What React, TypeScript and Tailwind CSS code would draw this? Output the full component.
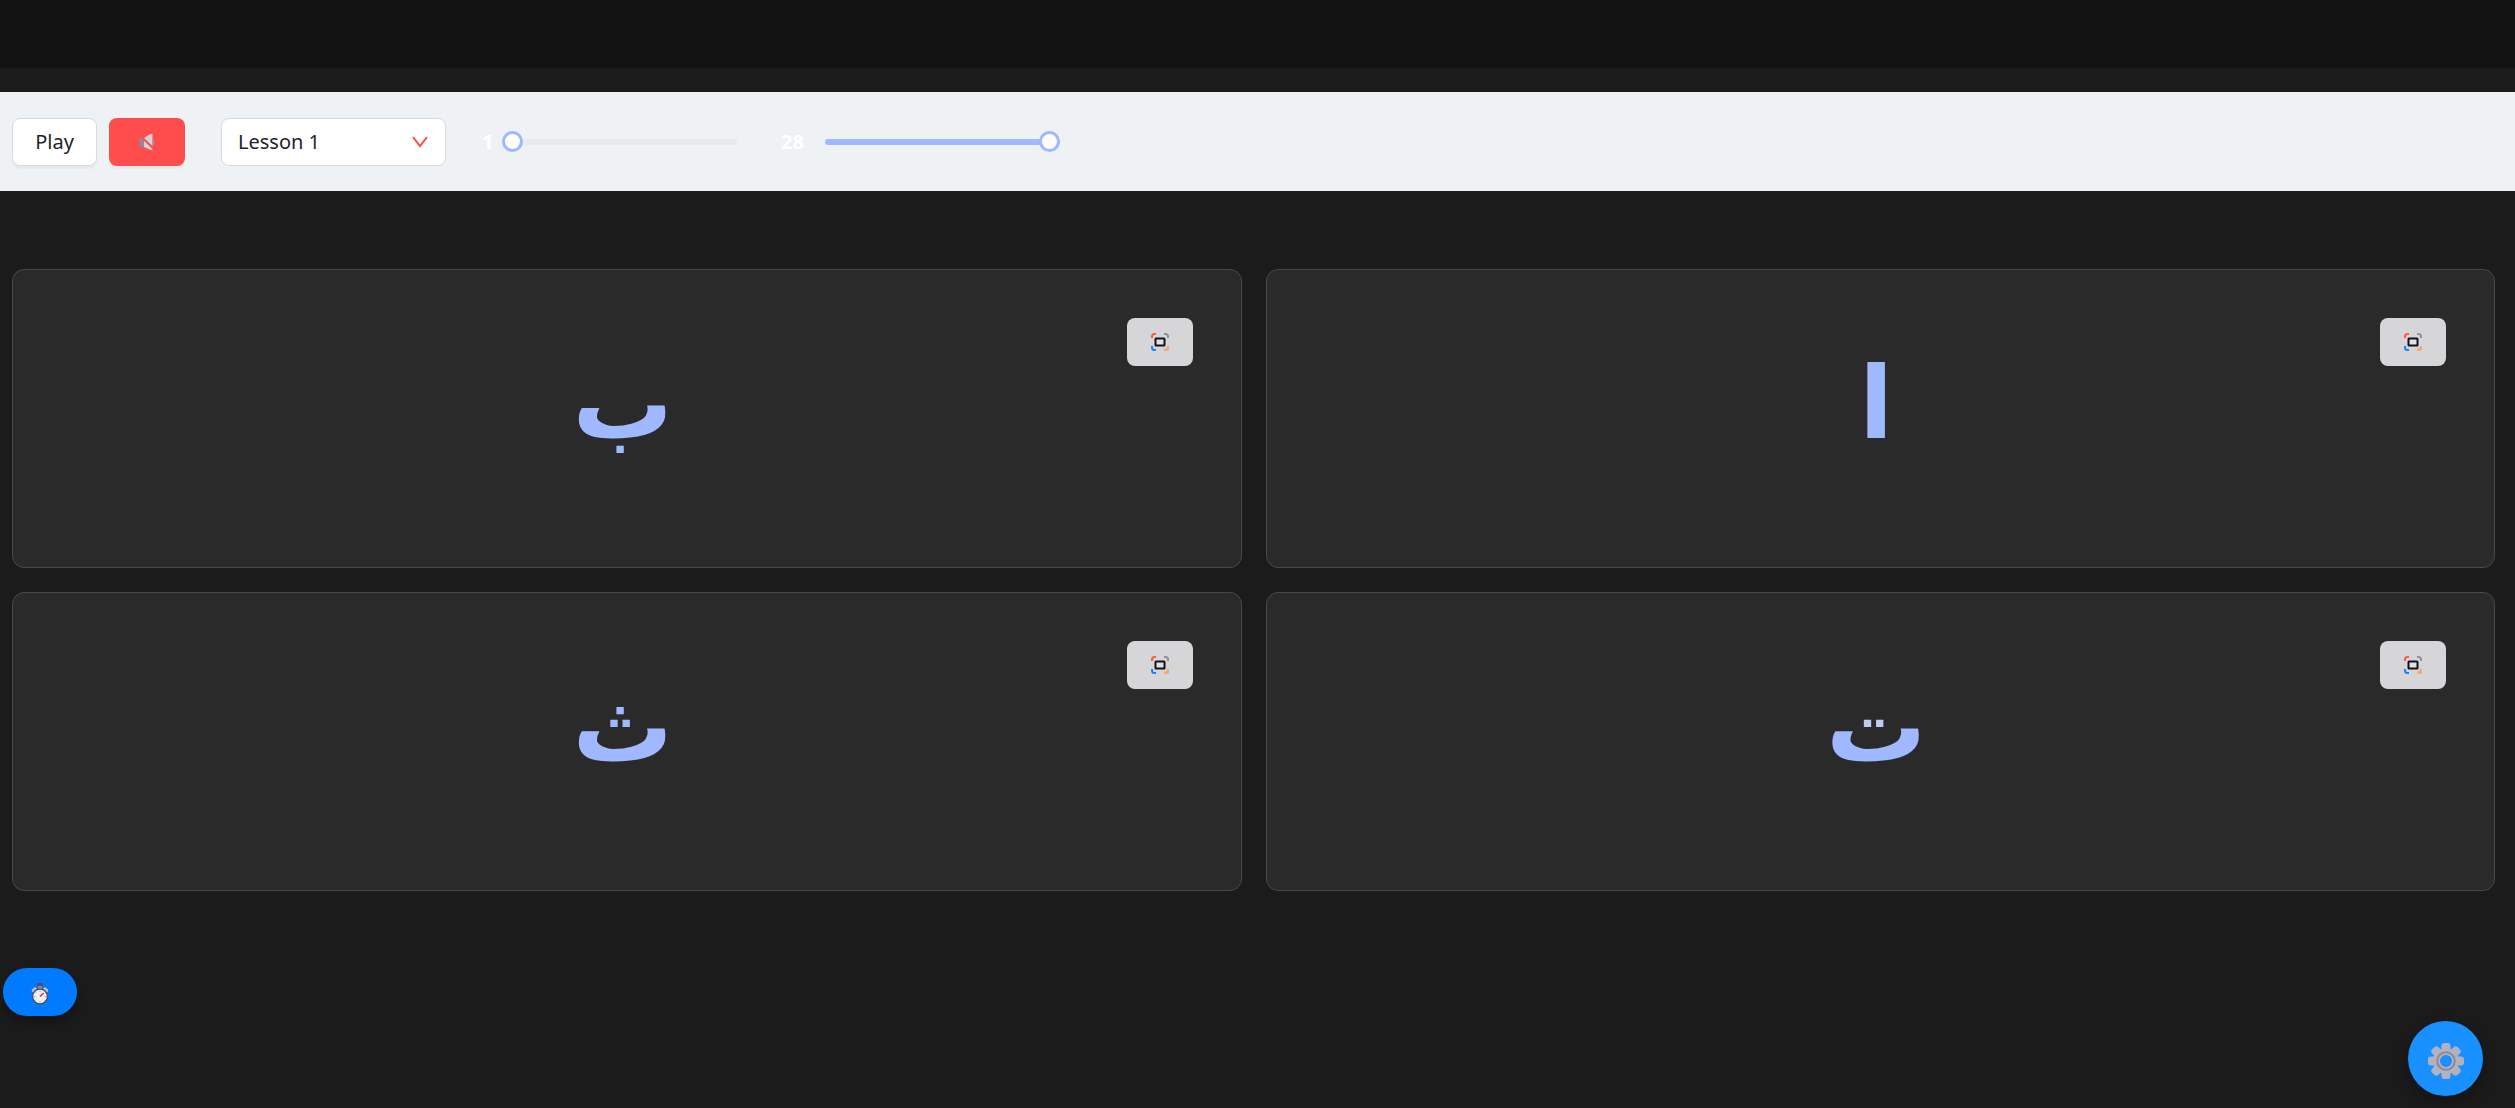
const letters = ['ا', 'ب', 'ت', 'ث'];

function MutedIcon() {
  return (
    <svg width="16" height="18" viewBox="0 0 16 18" aria-hidden="true">
      <path d="M0.500 5.500Q2.500 4.500 5 5V14Q2.500 14.500 0.500 13Z" fill="#8e8c9c" />
      <path d="M5 5L11.500 1H13.500V17H11.500L5 14Z" fill="#d4d3d8" />
      <path d="M13.500 6Q17 9 13.500 12.500Z" fill="#9b9aa8" />
      <path d="M2 3.500L15 16" stroke="#ff4d4d" strokeWidth="2" />
    </svg>
  );
}

function FocusIcon() {
  return (
    <svg width="18" height="18" viewBox="0 0 18 18" fill="none" strokeWidth="2" aria-hidden="true">
      <path d="M1 5V3.500Q1 1 3.500 1H5" stroke="#ff5a45" />
      <path d="M13 1H14.500Q17 1 17 3.500V5" stroke="#9390a2" />
      <path d="M1 13V14.500Q1 17 3.500 17H5" stroke="#1780ff" />
      <path d="M13 17H14.500Q17 17 17 14.500V13" stroke="#f4a97c" strokeWidth="3" />
      <rect x="4.500" y="5.500" width="9" height="7" rx="0.500" stroke="#141218" fill="#e2e1e6" />
    </svg>
  );
}

function StopwatchIcon() {
  return (
    <svg width="18" height="22" viewBox="0 0 18 22" aria-hidden="true">
      <rect x="6" y="0" width="6" height="4" rx="1" fill="#4f4d63" />
      <rect x="7.200" y="3" width="3.600" height="3" fill="#8d8b9c" />
      <path d="M2.500 7.500L4 6M15.500 7.500L14 6" stroke="#b6b9cf" strokeWidth="3.500" strokeLinecap="round" />
      <circle cx="9" cy="13.500" r="7.400" fill="#f1f1f4" stroke="#4c4a5c" strokeWidth="1.300" />
      <path d="M9 7.500V9M9 18V19.500M3 13.500H4.500M13.500 13.500H15M4.800 9.300L5.700 10.200M12.300 16.800L13.200 17.700M4.800 17.700L5.700 16.800" stroke="#a9a8b6" />
      <path d="M9 13.500L12.600 10" stroke="#f0332d" strokeWidth="1.700" />
    </svg>
  );
}

function GearIcon() {
  return (
    <svg width="36" height="36" viewBox="0 0 36 36" fill="none" aria-hidden="true">
      {[0, 45, 90, 135, 180, 225, 270, 315].map((angle) => (
        <rect key={angle} x="13.500" y="0" width="9" height="10" rx="3" fill="#b4b1bf" transform={`rotate(${angle} 18 18)`} />
      ))}
      <circle cx="18" cy="18" r="9.500" stroke="#b4b1bf" strokeWidth="7" />
      <circle cx="18" cy="18" r="8.800" stroke="#8d8b99" strokeWidth="2" />
    </svg>
  );
}

const sliderClass =
  'w-[235px] h-[21px] appearance-none rounded-full bg-transparent ' +
  '[&::-webkit-slider-thumb]:appearance-none [&::-webkit-slider-thumb]:w-[21px] [&::-webkit-slider-thumb]:h-[21px] [&::-webkit-slider-thumb]:-mt-2 ' +
  '[&::-webkit-slider-thumb]:rounded-full [&::-webkit-slider-thumb]:bg-white [&::-webkit-slider-thumb]:border-3 [&::-webkit-slider-thumb]:border-[#a0b8ff] ' +
  '[&::-webkit-slider-runnable-track]:h-[6px] [&::-webkit-slider-runnable-track]:rounded-full';

function LetterCard({ letter }: { letter: string }) {
  // the dots of this letter are tinted lighter than its body
  const color =
    letter === 'ت'
      ? 'bg-linear-to-b from-[#bccaf4] from-42% to-[#a0b8ff] to-42% bg-clip-text text-transparent'
      : 'text-[#a0b8ff]';

  return (
    <article className="grid min-h-[299px] rounded-xl border border-[#484848] bg-[#2a2a2a] p-12">
      <button
        type="button"
        aria-label="Focus letter"
        className="z-10 col-start-1 row-start-1 flex h-12 w-[66px] items-center justify-center justify-self-start rounded-lg bg-[#d6d6d9]"
      >
        <FocusIcon />
      </button>
      <p className={'col-start-1 row-start-1 self-center justify-self-center pr-2 pb-10 text-[100px] leading-[144px] font-bold ' + color}>
        {letter}
      </p>
    </article>
  );
}

export default function App() {
  return (
    <div className="flex min-h-screen flex-col bg-[#1b1b1b] font-['Noto_Sans','DejaVu_Sans',sans-serif]">
      <header className="h-[68px] bg-[#121212]" />

      <section className="mt-6 flex h-[99px] items-center bg-[#eef2f5] px-3 text-xl text-[#1f1f2b]">
        <button type="button" className="h-12 w-[85px] rounded-lg border border-[#d9d9d9] bg-white shadow-[0_3px_0_rgba(0,0,0,0.03)]">
          Play
        </button>
        <button
          type="button"
          aria-label="Mute"
          className="ml-3 flex h-12 w-[76px] items-center justify-center rounded-lg bg-[#ff4d4d] shadow-[0_3px_0_rgba(0,0,0,0.03)]"
        >
          <MutedIcon />
        </button>

        <div className="ml-9 grid w-[225px] items-center">
          <select
            aria-label="Lesson"
            className="col-start-1 row-start-1 h-12 w-full appearance-none rounded-lg border border-[#d9d9d9] bg-white px-4"
          >
            <option>Lesson 1</option>
          </select>
          <svg className="pointer-events-none col-start-1 row-start-1 mr-[18px] justify-self-end" width="16" height="12" viewBox="0 0 16 12" fill="none" aria-hidden="true">
            <path d="M1 1L8 10L15 1" stroke="#ff4d3d" strokeWidth="2" />
          </svg>
        </div>

        <label htmlFor="from" className="ml-9 w-5 font-bold text-white">1</label>
        <input
          id="from"
          type="range"
          min="1"
          max="28"
          defaultValue="1"
          className={sliderClass + ' [&::-webkit-slider-runnable-track]:bg-[#e9eaec]'}
        />
        <label htmlFor="to" className="ml-11 w-11 font-bold text-white">28</label>
        <input
          id="to"
          type="range"
          min="1"
          max="28"
          defaultValue="28"
          className={sliderClass + ' [&::-webkit-slider-runnable-track]:bg-[#a0b8ff]'}
        />
      </section>

      <main dir="rtl" className="grid grid-cols-2 gap-6 pt-[78px] pr-5 pl-3">
        {letters.map((letter) => (
          <LetterCard key={letter} letter={letter} />
        ))}
      </main>

      <button
        type="button"
        aria-label="Timer"
        className="fixed bottom-[92px] left-[3px] flex h-12 w-[74px] items-center justify-center rounded-full bg-[#007bff] pt-1 shadow-[0_6px_9px_rgba(0,0,0,0.3)]"
      >
        <StopwatchIcon />
      </button>
      <button
        type="button"
        aria-label="Settings"
        className="fixed right-8 bottom-3 flex size-[75px] items-center justify-center rounded-full bg-[#1890ff] pt-1 shadow-[0_6px_15px_rgba(0,0,0,0.3)]"
      >
        <GearIcon />
      </button>
    </div>
  );
}
